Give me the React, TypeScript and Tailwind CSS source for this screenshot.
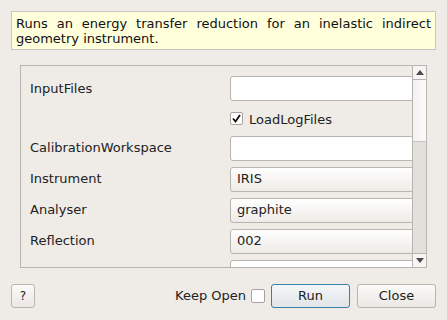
import { useState } from 'react'

const font = { fontFamily: '"DejaVu Sans", "Liberation Sans", sans-serif' }

function TextBox() {
  return <div className="h-[25px] w-[184px] shrink-0 rounded-[3px] border border-[#b8b4af] bg-white" />
}

function Combo({ value }: { value: string }) {
  return (
    <div className="flex h-[25px] w-[184px] shrink-0 items-center rounded-[3px] border border-[#b8b4af] bg-gradient-to-b from-white to-[#eeebe7] pl-[6px] text-[13px] text-[#222]">
      {value}
    </div>
  )
}

function Row({ label, children }: { label: string; children: React.ReactNode }) {
  return (
    <div className="flex items-center">
      <div className="w-[200px] shrink-0 text-[13px] text-[#222]">{label}</div>
      {children}
    </div>
  )
}

export default function App() {
  const [keep, setKeep] = useState(false)
  return (
    <div className="h-[320px] w-[447px] overflow-hidden bg-[#efebe7]" style={font}>
      <div className="px-[11px] pt-[11px]">
        <div className="border border-[#c9c6bf] bg-[#ffffdc] px-[4px] pb-[3px] pt-[4px] text-justify text-[13px] leading-[15px] text-[#111]">
          Runs an energy transfer reduction for an inelastic indirect geometry instrument.
        </div>
      </div>

      <div className="mx-[20px] mt-[15px] flex h-[203px] w-[407px] border border-[#b8b4af]">
        <div className="flex flex-1 flex-col gap-[6px] overflow-hidden pl-[9px] pt-[10px]">
          <Row label="InputFiles">
            <TextBox />
          </Row>
          <div className="flex h-[27px] items-start pl-[200px] pt-[5px]">
            <div className="flex h-[13px] w-[13px] items-center justify-center rounded-[2px] border border-[#a8a39d] bg-white">
              <svg width="9" height="9" viewBox="0 0 9 9">
                <path d="M1 4.5 L3.5 7.5 L8 1" fill="none" stroke="#111" strokeWidth="1.8" />
              </svg>
            </div>
            <span className="-mt-[2px] ml-[6px] text-[13px] text-[#222]">LoadLogFiles</span>
          </div>
          <Row label="CalibrationWorkspace">
            <TextBox />
          </Row>
          <Row label="Instrument">
            <Combo value="IRIS" />
          </Row>
          <Row label="Analyser">
            <Combo value="graphite" />
          </Row>
          <Row label="Reflection">
            <Combo value="002" />
          </Row>
          <Row label="">
            <TextBox />
          </Row>
        </div>
        <div className="flex w-[14px] shrink-0 flex-col border-l border-[#b8b4af] bg-[#e3e0dc]">
          <div className="flex h-[14px] items-center justify-center border-b border-[#b8b4af] bg-[#f6f5f3]">
            <svg width="8" height="5" viewBox="0 0 8 5"><path d="M0 5 L4 0 L8 5 Z" fill="#4a4a4a" /></svg>
          </div>
          <div className="h-[62px] border-b border-[#c8c5c0] bg-gradient-to-r from-[#f2f1ef] to-[#fbfbfa]" />
          <div className="flex-1" />
          <div className="flex h-[14px] items-center justify-center border-t border-[#b8b4af] bg-[#f6f5f3]">
            <svg width="8" height="5" viewBox="0 0 8 5"><path d="M0 0 L8 0 L4 5 Z" fill="#4a4a4a" /></svg>
          </div>
        </div>
      </div>

      <div className="mt-[16px] flex items-center px-[11px]">
        <button className="flex h-[24px] w-[24px] items-center justify-center rounded-[3px] border border-[#b8b4af] bg-gradient-to-b from-[#fafaf9] to-[#ebe8e4] text-[12px] text-[#222]">
          ?
        </button>
        <div className="flex-1" />
        <span className="text-[13px] text-[#222]">Keep Open</span>
        <div
          onClick={() => setKeep(!keep)}
          className="ml-[5px] h-[14px] w-[14px] rounded-[2px] border border-[#a8a39d] bg-white"
        />
        <button className="ml-[6px] h-[24px] w-[79px] rounded-[3px] border border-[#3b7ea8] bg-gradient-to-b from-[#f4f6f7] to-[#e1e5e8] text-[13px] text-[#222]">
          Run
        </button>
        <button className="ml-[7px] h-[24px] w-[79px] rounded-[3px] border border-[#b8b4af] bg-gradient-to-b from-[#fafaf9] to-[#ebe8e4] text-[13px] text-[#222]">
          Close
        </button>
      </div>
    </div>
  )
}
